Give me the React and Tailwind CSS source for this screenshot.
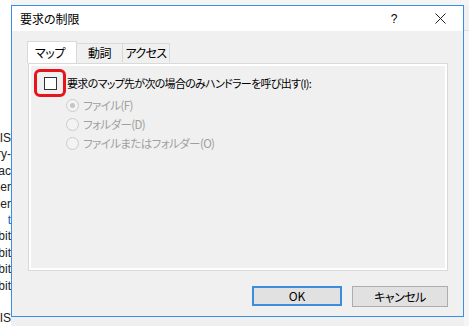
import React from "react";

const jp = "font-['Meiryo_UI','Noto_Sans_CJK_JP',sans-serif] [font-feature-settings:'palt']";

// fragments of the window behind the dialog
const behind = ["-IS", "ry-", "Fac", "er", "er", "t", "bit", "bit", "bit", "bit", "", "-IS"];

function Tab({ label, active, width }) {
  if (active) {
    return (
      <div className="relative z-10 -mb-px h-[22px] w-[50px] border border-b-0 border-[#d9d9d9] bg-white flex items-center pl-[7px] text-[12px] tracking-[-0.3px] text-black">
        {label}
      </div>
    );
  }
  return (
    <div className={`mt-[2px] h-[19px] -ml-px border border-b-0 border-[#d9d9d9] bg-[#f0f0f0] flex items-center justify-center text-[12px] tracking-[-0.6px] text-black ${width}`}>
      {label}
    </div>
  );
}

function Radio({ label, checked }) {
  return (
    <div className="flex items-center h-[19px] gap-[4px]">
      <span className="w-[13px] h-[13px] rounded-full border border-[#cccccc] bg-[#f3f3f3] flex items-center justify-center">
        {checked && <span className="w-[5px] h-[5px] rounded-full bg-[#c5c5c5]" />}
      </span>
      <span className="text-[11.5px] tracking-[-0.6px] text-[#a0a0a0]">{label}</span>
    </div>
  );
}

export default function App() {
  return (
    <div className={`w-[469px] h-[326px] overflow-hidden grid grid-cols-[11px_453px_1fr] grid-rows-[5px_312px_1fr] bg-[#f0f0f0] ${jp}`}>
      {/* left strip: the list behind */}
      <div className="row-span-3 bg-white flex flex-col pt-[130px] overflow-hidden font-['Liberation_Sans',sans-serif] text-[12px] text-[#222] leading-[16.4px]">
        {behind.map((t, i) => (
          <div key={i} className={`h-[16.4px] flex justify-end whitespace-nowrap ${t === "t" ? "text-[#1a5fb4]" : ""}`}>
            {t}
          </div>
        ))}
      </div>

      {/* top strip */}
      <div className="col-span-2 bg-[#f4f4f4]" />

      {/* dialog */}
      <div className="border border-[#3a8ee6] bg-[#f0f0f0] flex flex-col">
        <div className="h-[25px] bg-white flex items-center">
          <span className="pl-[8px] text-[12px] text-black flex-1">要求の制限</span>
          <span className="w-[46px] h-full flex items-center justify-center font-['Liberation_Sans',sans-serif] text-[12px] text-black">?</span>
          <span className="w-[46px] h-full flex items-center justify-center">
            <svg width="11" height="11" viewBox="0 0 11 11">
              <path d="M0.5 0.5 L10.5 10.5 M10.5 0.5 L0.5 10.5" stroke="#222" strokeWidth="1" />
            </svg>
          </span>
        </div>

        <div className="flex-1 flex flex-col pl-[15px] pr-[15px] pt-[10px]">
          <div className="flex items-start h-[22px]">
            <Tab label="マップ" active />
            <Tab label="動詞" width="w-[47px]" />
            <Tab label="アクセス" width="w-[48px]" />
          </div>

          <div className="ml-[1px] h-[208px] border border-[#d9d9d9] bg-white p-[2px]">
            <div className="h-full bg-[#f0f0f0] flex flex-col pl-[3px] pt-[3px]">
              <div className="flex items-center h-[28px]">
                <div className="w-[32px] h-[28px] rounded-[6px] border-[3px] border-[#e8141b] flex items-center justify-center">
                  <span className="w-[13px] h-[13px] border border-[#333] bg-white" />
                </div>
                <span className="ml-[1px] text-[11px] tracking-[-0.7px] text-black">要求のマップ先が次の場合のみハンドラーを呼び出す(I):</span>
              </div>
              <div className="flex flex-col pl-[32px] -mt-[1px]">
                <Radio label="ファイル(F)" checked />
                <Radio label="フォルダー(D)" />
                <Radio label="ファイルまたはフォルダー(O)" />
              </div>
            </div>
          </div>

          <div className="flex justify-end gap-[10px] mt-[15px]">
            <button className="w-[90px] h-[20px] border-2 border-[#3c8ddb] bg-[#e1e1e1] text-[12px] text-black flex items-center justify-center">
              OK
            </button>
            <button className="w-[96px] h-[21px] border border-[#adadad] bg-[#e1e1e1] text-[12px] tracking-[-0.5px] text-black flex items-center justify-center">
              キャンセル
            </button>
          </div>
        </div>
      </div>

      {/* right strip */}
      <div className="row-span-2 bg-[#f5f5f5] border-t border-[#dedede] mt-[25px]" />

      {/* bottom strip */}
      <div className="col-span-1 bg-[#f0f0f0]" />
    </div>
  );
}
